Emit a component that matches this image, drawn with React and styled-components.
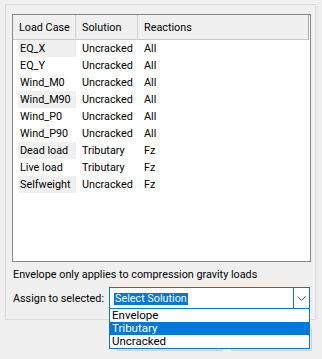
import React from 'react';
import styled, { createGlobalStyle } from 'styled-components';

const GlobalStyle = createGlobalStyle`
  body {
    margin: 0;
    background: #f0f0f0;
    font-family: Roboto, "Noto Sans", sans-serif;
    font-size: 10.8px;
    color: #000;
  }
`;

const Page = styled.div`
  position: relative;
  width: 322px;
  height: 359px;
  overflow: hidden;
  padding: 4px 0 0 5px;
  box-sizing: border-box;
`;

const GroupBox = styled.div`
  width: 311px;
  height: 316px;
  box-sizing: border-box;
  border: 1px solid #dcdcdc;
  box-shadow: 1px 0 0 #f0f0f0, 2px 0 0 #e3e3e3;
  padding: 9px 0 0 6px;
  display: flex;
  flex-direction: column;
`;

const Table = styled.div`
  width: 299px;
  height: 248px;
  box-sizing: border-box;
  border: 1px solid #828790;
  background: #fff;
  padding-right: 1px;
`;

const Header = styled.div`
  display: grid;
  grid-template-columns: 63px 62px 1fr;
  height: 25px;
  box-sizing: border-box;
  background: #f0f0f0;
  border-bottom: 1px solid #c8c8c8;
  border-right: 1px solid #a8a8a8;
`;

const HeadCell = styled.div`
  display: flex;
  align-items: center;
  padding-left: 6px;
  border-right: ${p => (p.$last ? 'none' : '1px solid #d0d0d0')};
`;

const Row = styled.div`
  display: grid;
  grid-template-columns: 63px 62px 1fr;
  height: 17px;
  line-height: 17px;
`;

const NameCell = styled.div`
  margin-left: 5px;
  padding-left: 2px;
  background: ${p => (p.$shade ? '#f0f0f0' : 'transparent')};
  white-space: nowrap;
`;

const Cell = styled.div`
  padding-left: 6px;
  white-space: nowrap;
`;

const Note = styled.div`
  margin: 5px 0 0 1px;
  line-height: 16px;
  white-space: nowrap;
`;

const AssignRow = styled.div`
  display: flex;
  align-items: center;
  margin: 4px 0 0 1px;
  height: 22px;
`;

const Label = styled.div`
  width: 96px;
  white-space: nowrap;
`;

const SelectBox = styled.div`
  position: relative;
  width: 201px;
  height: 22px;
  box-sizing: border-box;
  border: 1px solid #0078d7;
  background: #fff;
  display: flex;
  align-items: center;
`;

const SelectValue = styled.div`
  flex: 1;
  padding-left: 4px;
`;

const Selected = styled.span`
  background: #0078d7;
  color: #fff;
  padding: 0 1px;
  line-height: 12px;
  display: inline-block;
`;

const Arrow = styled.div`
  width: 15px;
  height: 100%;
  border-left: 1px solid #0078d7;
  display: flex;
  align-items: center;
  justify-content: center;
`;

const List = styled.div`
  position: absolute;
  left: -1px;
  top: 20px;
  width: 201px;
  box-sizing: border-box;
  border: 1px solid #0078d7;
  background: #fff;
  z-index: 2;
  font-size: 11.5px;
`;

const Option = styled.div`
  height: 13px;
  line-height: 13px;
  padding-left: 2px;
  background: ${p => (p.$active ? '#0078d7' : '#fff')};
  color: ${p => (p.$active ? '#fff' : '#000')};
`;

const Buttons = styled.div`
  display: flex;
  gap: 6px;
  margin: 7px 0 0 111px;
`;

const Button = styled.div`
  width: ${p => p.$w}px;
  height: 24px;
  box-sizing: border-box;
  border: 1px solid #cfcfcf;
  border-radius: 3px;
  background: #e8e8e8;
`;

const rows = [
  ['EQ_X', 'Uncracked', 'All', true],
  ['EQ_Y', 'Uncracked', 'All', false],
  ['Wind_M0', 'Uncracked', 'All', false],
  ['Wind_M90', 'Uncracked', 'All', true],
  ['Wind_P0', 'Uncracked', 'All', false],
  ['Wind_P90', 'Uncracked', 'All', false],
  ['Dead load', 'Tributary', 'Fz', true],
  ['Live load', 'Tributary', 'Fz', false],
  ['Selfweight', 'Uncracked', 'Fz', true],
];

export default function App() {
  return (
    <Page>
      <GlobalStyle />
      <GroupBox>
        <Table>
          <Header>
            <HeadCell>Load Case</HeadCell>
            <HeadCell>Solution</HeadCell>
            <HeadCell $last>Reactions</HeadCell>
          </Header>
          {rows.map(([name, sol, reac, shade]) => (
            <Row key={name}>
              <NameCell $shade={shade}>{name}</NameCell>
              <Cell>{sol}</Cell>
              <Cell>{reac}</Cell>
            </Row>
          ))}
        </Table>
        <Note>Envelope only applies to compression gravity loads</Note>
        <AssignRow>
          <Label>Assign to selected:</Label>
          <SelectBox>
            <SelectValue><Selected>Select Solution</Selected></SelectValue>
            <Arrow>
              <svg width="9" height="5" viewBox="0 0 9 5">
                <path d="M0.5 0.5 L4.5 4.5 L8.5 0.5" fill="none" stroke="#606060" strokeWidth="1" />
              </svg>
            </Arrow>
            <List>
              <Option>Envelope</Option>
              <Option $active>Tributary</Option>
              <Option>Uncracked</Option>
            </List>
          </SelectBox>
        </AssignRow>
      </GroupBox>
      <Buttons>
        <Button $w={108} />
        <Button $w={82} />
      </Buttons>
    </Page>
  );
}
